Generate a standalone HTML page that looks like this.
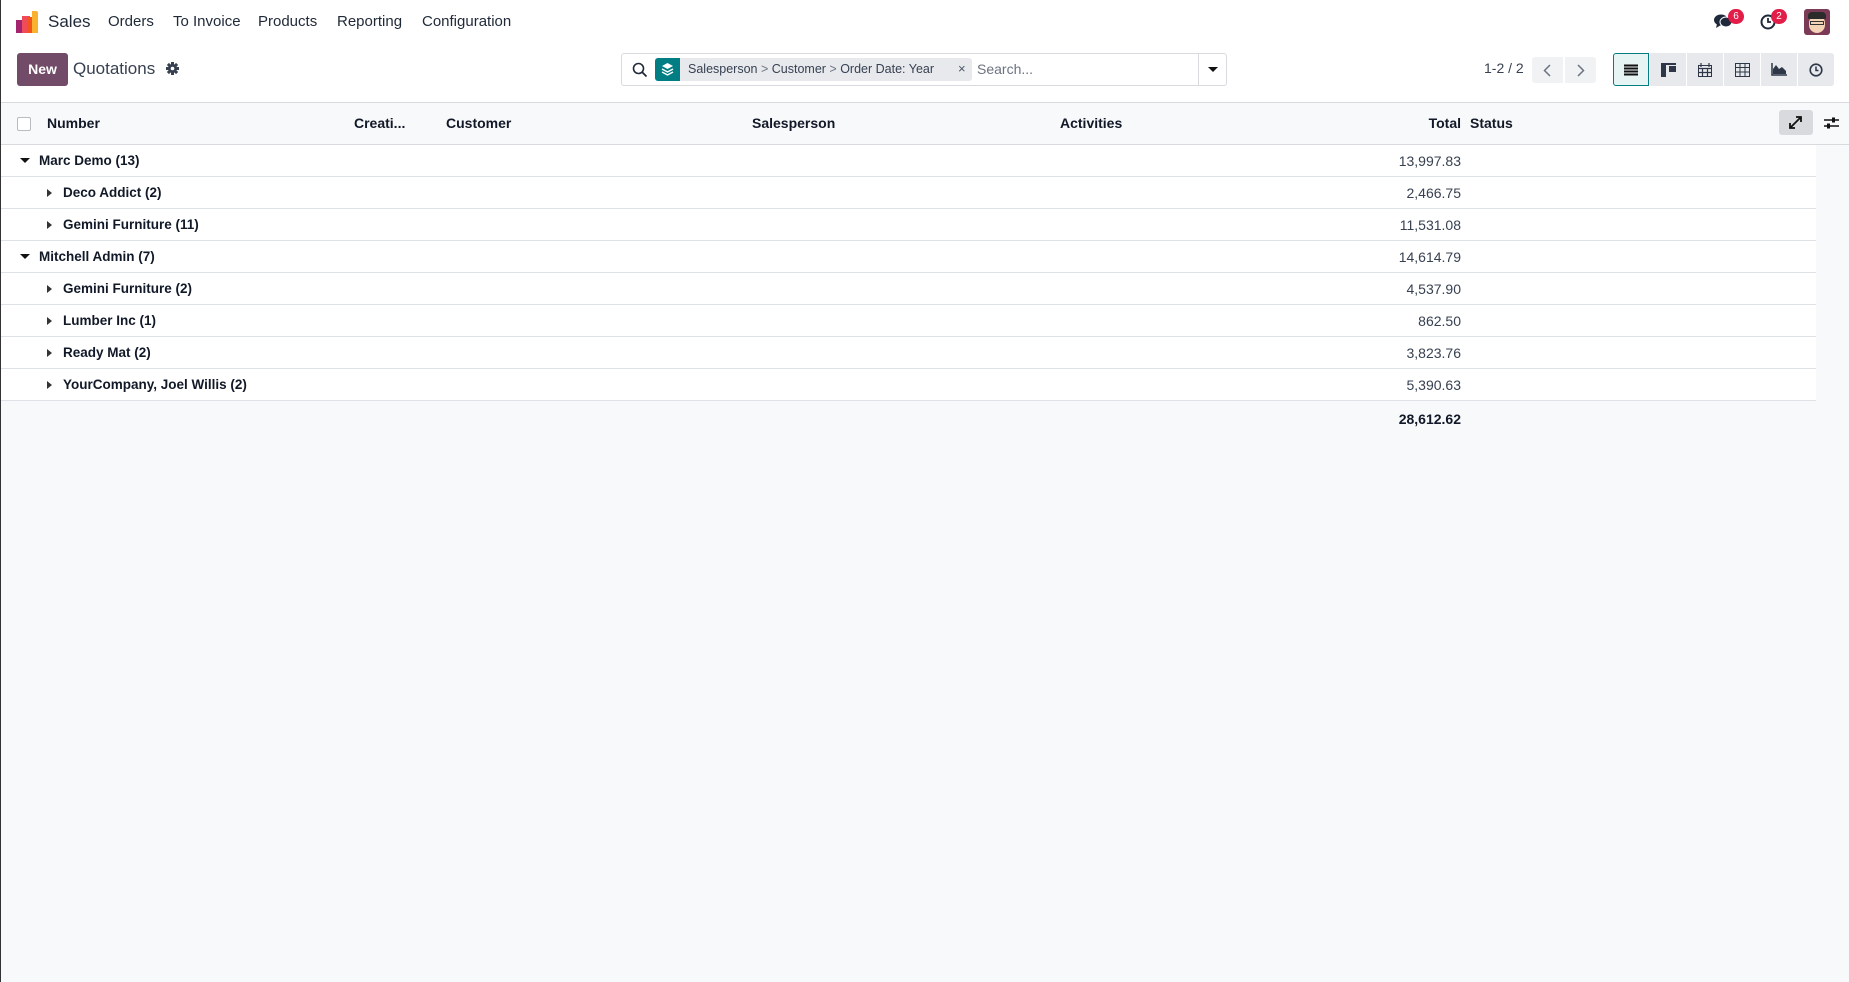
<!DOCTYPE html>
<html><head><meta charset="utf-8"><style>
*{box-sizing:border-box;margin:0;padding:0}
body{width:1849px;height:982px;overflow:hidden;background:#f8f9fa;font-family:"Liberation Sans",sans-serif;color:#374151;position:relative}
.abs{position:absolute}
.lb{position:absolute;left:0;top:0;width:1px;height:982px;background:#333;z-index:5}
.top{position:absolute;left:0;top:0;width:1849px;height:103px;background:#fff;border-bottom:1px solid #d8dadd}
.nav{position:absolute;top:13px;font-size:15px;color:#1f2937}
.hdr{position:absolute;left:0;top:103px;width:1849px;height:42px;background:#f8f9fa;border-bottom:1px solid #d8dadd;font-weight:bold;font-size:14px;color:#111827}
.hdr span{position:absolute;top:12px}
.row{position:absolute;left:0;width:1816px;height:32px;background:#fff;border-bottom:1px solid #dee2e6;font-size:14px;color:#111827}
.row .l{position:absolute;top:8px;font-weight:bold;font-size:13.5px}
.row .t{position:absolute;right:355px;top:8px;color:#374151}
.car{position:absolute;top:13px;width:0;height:0}
.down{border-left:5px solid transparent;border-right:5px solid transparent;border-top:5px solid #111}
.right{border-top:4px solid transparent;border-bottom:4px solid transparent;border-left:5px solid #333;top:12px}
.vb{position:absolute;top:53px;height:33px;width:36px;background:#e7e9ed;display:flex;align-items:center;justify-content:center}
.badge{position:absolute;background:#e11d48;color:#fff;font-size:10px;border-radius:8px;width:16px;height:15px;text-align:center;line-height:15px}
</style></head><body>
<div class="lb"></div>
<div class="top">
  <div class="abs" style="left:16px;top:20px;width:11px;height:13px;background:#a3246f"></div>
  <div class="abs" style="left:22px;top:16px;width:8px;height:17px;background:#ef4b5a"></div>
  <div class="abs" style="left:27px;top:17px;width:5px;height:16px;background:#f2541b"></div>
  <div class="abs" style="left:32px;top:11px;width:6px;height:22px;background:#fbb130;border-radius:0 2px 0 0"></div>
  <div class="nav" style="left:48px;font-size:17px;top:12px">Sales</div>
  <div class="nav" style="left:108px">Orders</div>
  <div class="nav" style="left:173px">To Invoice</div>
  <div class="nav" style="left:258px">Products</div>
  <div class="nav" style="left:337px">Reporting</div>
  <div class="nav" style="left:422px">Configuration</div>
  <svg class="abs" style="left:1714px;top:13px" width="20" height="16" viewBox="0 0 20 16"><ellipse cx="7" cy="7" rx="7" ry="5.5" fill="#1e293b"/><ellipse cx="12" cy="9" rx="6" ry="5" fill="#1e293b" stroke="#fff" stroke-width="1"/><path d="M3 11 L2 15 L7 12Z" fill="#1e293b"/></svg>
  <div class="badge" style="left:1728px;top:9px">6</div>
  <svg class="abs" style="left:1760px;top:13px" width="17" height="17" viewBox="0 0 17 17"><circle cx="8" cy="9" r="6.5" fill="none" stroke="#1e293b" stroke-width="2"/><path d="M8 5V9H11" stroke="#1e293b" stroke-width="1.8" fill="none"/></svg>
  <div class="badge" style="left:1771px;top:9px">2</div>
  <div class="abs" style="left:1804px;top:9px;width:26px;height:26px;border-radius:3px;background:#7b3a55;overflow:hidden">
    <div class="abs" style="left:5px;top:6px;width:16px;height:18px;border-radius:8px;background:#f4d2b5"></div>
    <div class="abs" style="left:4px;top:3px;width:18px;height:7px;background:#2b2b2b;border-radius:4px 4px 1px 1px"></div>
    <div class="abs" style="left:6px;top:12px;width:14px;height:4px;border:1px solid #333"></div>
  </div>
  <div class="abs" style="left:17px;top:53px;width:51px;height:33px;background:#714b67;border-radius:3px;color:#fff;font-weight:bold;font-size:14px;text-align:center;line-height:33px">New</div>
  <div class="abs" style="left:73px;top:59px;font-size:17px;color:#374151">Quotations</div>
  <svg class="abs" style="left:166px;top:62px" width="13" height="13" viewBox="0 0 13 13"><g fill="#374151"><circle cx="6.5" cy="6.5" r="4.5"/><rect x="5" y="0" width="3" height="13"/><rect x="0" y="5" width="13" height="3"/><rect x="5" y="0" width="3" height="13" transform="rotate(45 6.5 6.5)"/><rect x="5" y="0" width="3" height="13" transform="rotate(-45 6.5 6.5)"/></g><circle cx="6.5" cy="6.5" r="1.8" fill="#fff"/></svg>
  <div class="abs" style="left:621px;top:53px;width:606px;height:33px;border:1px solid #d8dadd;border-radius:3px;background:#fff">
    <svg class="abs" style="left:10px;top:8px" width="16" height="16" viewBox="0 0 16 16"><circle cx="6.5" cy="6.5" r="5" fill="none" stroke="#1f2937" stroke-width="1.6"/><path d="M10 10L14.5 14.5" stroke="#1f2937" stroke-width="1.8"/></svg>
    <div class="abs" style="left:33px;top:4px;width:317px;height:23px;background:#e7e9ed;border-radius:3px"></div>
    <div class="abs" style="left:33px;top:4px;width:25px;height:23px;background:#017e84;border-radius:3px 0 0 3px"></div>
    <svg class="abs" style="left:39px;top:8px" width="13" height="14" viewBox="0 0 13 14"><path d="M6.5 1L12 4L6.5 7L1 4Z" fill="#fff"/><path d="M1 7L6.5 10L12 7M1 10L6.5 13L12 10" stroke="#fff" stroke-width="1.4" fill="none"/></svg>
    <div class="abs" style="left:66px;top:8px;font-size:12.5px;color:#374151;white-space:nowrap">Salesperson <span style="color:#6b7280">&gt;</span> Customer <span style="color:#6b7280">&gt;</span> Order Date: Year</div>
    <div class="abs" style="left:336px;top:7px;font-size:13px;color:#4b5563">×</div>
    <div class="abs" style="left:355px;top:7px;font-size:14px;color:#6b7280">Search...</div>
    <div class="abs" style="left:576px;top:0;width:1px;height:31px;background:#d8dadd"></div>
    <div class="car down" style="left:586px;top:13px"></div>
  </div>
  <div class="abs" style="left:1484px;top:60px;font-size:14px;color:#374151">1-2 / 2</div>
  <div class="abs" style="left:1532px;top:57px;width:31px;height:26px;background:#f1f2f4;border-radius:3px 0 0 3px"><svg class="abs" style="left:11px;top:7px" width="8" height="13"><path d="M7 1L1.5 6.5L7 12" stroke="#6b7280" stroke-width="1.5" fill="none"/></svg></div>
  <div class="abs" style="left:1565px;top:57px;width:31px;height:26px;background:#f1f2f4;border-radius:0 3px 3px 0"><svg class="abs" style="left:12px;top:7px" width="8" height="13"><path d="M1 1L6.5 6.5L1 12" stroke="#6b7280" stroke-width="1.5" fill="none"/></svg></div>
  <div class="vb" style="left:1613px;background:#e6f4f4;border:1px solid #017e84;border-radius:3px 0 0 3px"><svg width="14" height="12"><path d="M0 1.5H14M0 4.5H14M0 7.5H14M0 10.5H14" stroke="#111" stroke-width="2"/></svg></div>
  <div class="vb" style="left:1650px"><svg width="15" height="14"><rect x="0" y="0" width="15" height="2" fill="#2d3748"/><rect x="0" y="0" width="5" height="14" fill="#2d3748"/><rect x="8" y="3" width="7" height="6" fill="#2d3748"/></svg></div>
  <div class="vb" style="left:1687px"><svg width="14" height="14"><rect x="0.5" y="2.5" width="13" height="11" fill="none" stroke="#2d3748"/><path d="M0 5.5H14M4.5 5V14M9.5 5V14M0 9.5H14M3 0V4M11 0V4" stroke="#2d3748" stroke-width="1.2"/></svg></div>
  <div class="vb" style="left:1724px"><svg width="15" height="14"><rect x="0.5" y="0.5" width="14" height="13" fill="none" stroke="#2d3748"/><path d="M0 4.5H15M0 9H15M5 0V14M10 0V14" stroke="#2d3748"/></svg></div>
  <div class="vb" style="left:1761px"><svg width="16" height="13"><path d="M1 0V12H16" stroke="#2d3748" stroke-width="1.5" fill="none"/><path d="M2 11L2 6L5 2L8 6L11 4L15 8V11Z" fill="#2d3748"/></svg></div>
  <div class="vb" style="left:1798px;border-radius:0 3px 3px 0"><svg width="14" height="14"><circle cx="7" cy="7" r="5.8" fill="none" stroke="#2d3748" stroke-width="1.6"/><path d="M7 3.5V7.5H9.5" stroke="#2d3748" stroke-width="1.5" fill="none"/></svg></div>
</div>
<div class="hdr">
  <div class="abs" style="left:17px;top:14px;width:14px;height:14px;border:1px solid #b8bcc2;background:#fff;border-radius:2px"></div>
  <span style="left:47px">Number</span>
  <span style="left:354px">Creati...</span>
  <span style="left:446px">Customer</span>
  <span style="left:752px">Salesperson</span>
  <span style="left:1060px">Activities</span>
  <span style="right:388px">Total</span>
  <span style="left:1470px">Status</span>
  <div class="abs" style="left:1779px;top:7px;width:34px;height:25px;background:#d8dadd;border-radius:3px"></div>
  <svg class="abs" style="left:1789px;top:13px" width="13" height="13"><path d="M1 12L12 1M7 1H12V6M1 7V12H6" stroke="#111" stroke-width="1.8" fill="none"/></svg>
  <svg class="abs" style="left:1824px;top:13px" width="15" height="14"><path d="M0 4H15M0 10H15" stroke="#111" stroke-width="1.5"/><rect x="8" y="1.5" width="3" height="5" fill="#111"/><rect x="3" y="7.5" width="3" height="5" fill="#111"/></svg>
</div>
<div class="row" style="top:145px"><div class="car down" style="left:20px"></div><div class="l" style="left:39px">Marc Demo (13)</div><div class="t">13,997.83</div></div>
<div class="row" style="top:177px"><div class="car right" style="left:47px"></div><div class="l" style="left:63px">Deco Addict (2)</div><div class="t">2,466.75</div></div>
<div class="row" style="top:209px"><div class="car right" style="left:47px"></div><div class="l" style="left:63px">Gemini Furniture (11)</div><div class="t">11,531.08</div></div>
<div class="row" style="top:241px"><div class="car down" style="left:20px"></div><div class="l" style="left:39px">Mitchell Admin (7)</div><div class="t">14,614.79</div></div>
<div class="row" style="top:273px"><div class="car right" style="left:47px"></div><div class="l" style="left:63px">Gemini Furniture (2)</div><div class="t">4,537.90</div></div>
<div class="row" style="top:305px"><div class="car right" style="left:47px"></div><div class="l" style="left:63px">Lumber Inc (1)</div><div class="t">862.50</div></div>
<div class="row" style="top:337px"><div class="car right" style="left:47px"></div><div class="l" style="left:63px">Ready Mat (2)</div><div class="t">3,823.76</div></div>
<div class="row" style="top:369px"><div class="car right" style="left:47px"></div><div class="l" style="left:63px">YourCompany, Joel Willis (2)</div><div class="t">5,390.63</div></div>
<div class="abs" style="right:388px;top:411px;font-weight:bold;font-size:14px;color:#111827">28,612.62</div>
</body></html>
